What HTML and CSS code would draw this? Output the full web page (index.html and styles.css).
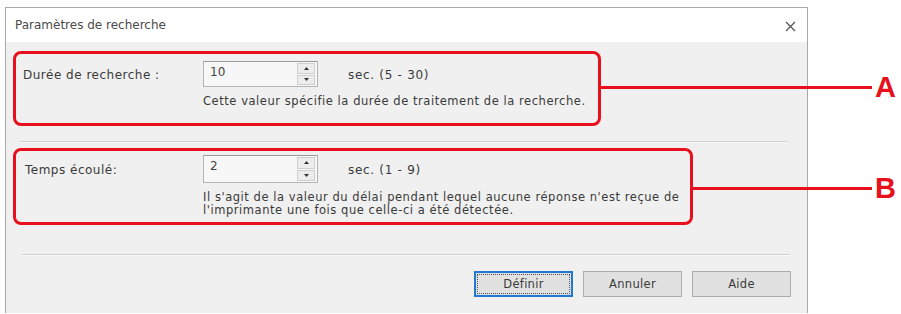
FILE: index.html
```html
<!DOCTYPE html>
<html lang="fr">
<head>
<meta charset="utf-8">
<title>Paramètres de recherche</title>
<link rel="stylesheet" href="styles.css">
</head>
<body>
<div class="dialog">
  <div class="titlebar">
    <span class="title">Paramètres de recherche</span>
    <span class="close" aria-label="Fermer">
      <svg width="11" height="11" viewBox="0 0 11 11"><path d="M1 1 L10 10 M10 1 L1 10" stroke="#555" stroke-width="1.3" fill="none"/></svg>
    </span>
  </div>
  <div class="body">
    <div class="group group-a">
      <div class="row">
        <span class="label">Durée de recherche :</span>
        <div class="spin">
          <span class="value">10</span>
          <div class="arrows">
            <span class="arrow"><svg width="5" height="3" viewBox="0 0 5 3"><path d="M0 3 L2.5 0 L5 3Z" fill="#333"/></svg></span>
            <span class="arrow"><svg width="5" height="3" viewBox="0 0 5 3"><path d="M0 0 L2.5 3 L5 0Z" fill="#333"/></svg></span>
          </div>
        </div>
        <span class="unit">sec. (5 - 30)</span>
      </div>
      <p class="desc desc-a">Cette valeur spécifie la durée de traitement de la recherche.</p>
      <div class="callout callout-a"><span class="leader"></span><span class="letter">A</span></div>
    </div>
    <div class="sep sep-top"></div>
    <div class="group group-b">
      <div class="row">
        <span class="label label-b">Temps écoulé:</span>
        <div class="spin">
          <span class="value">2</span>
          <div class="arrows">
            <span class="arrow"><svg width="5" height="3" viewBox="0 0 5 3"><path d="M0 3 L2.5 0 L5 3Z" fill="#333"/></svg></span>
            <span class="arrow"><svg width="5" height="3" viewBox="0 0 5 3"><path d="M0 0 L2.5 3 L5 0Z" fill="#333"/></svg></span>
          </div>
        </div>
        <span class="unit">sec. (1 - 9)</span>
      </div>
      <p class="desc desc-b">Il s'agit de la valeur du délai pendant lequel aucune réponse n'est reçue de<br>l'imprimante une fois que celle-ci a été détectée.</p>
      <div class="callout callout-b"><span class="leader"></span><span class="letter">B</span></div>
    </div>
    <div class="sep sep-bottom"></div>
    <div class="buttons">
      <button class="btn btn-default"><span class="focus">Définir</span></button>
      <button class="btn">Annuler</button>
      <button class="btn">Aide</button>
    </div>
  </div>
</div>
</body>
</html>
```

FILE: styles.css
```css
* { box-sizing: border-box; }
html, body { margin: 0; padding: 0; background: #ffffff; }
body {
  font-family: "DejaVu Sans", Verdana, sans-serif;
  font-size: 11px;
  color: #3a3a3a;
  width: 901px;
  height: 314px;
  overflow: hidden;
}
.dialog {
  margin: 7px 0 0 5px;
  width: 803px;
  height: 306px;
  border: 1px solid #a8a8a8;
  border-bottom: 0;
  background: #f0f0f0;
}
.titlebar {
  height: 34px;
  background: #ffffff;
  display: flex;
  align-items: center;
  justify-content: space-between;
  padding: 0 11px 0 9px;
}
.title { font-size: 12px; color: #4a4a4a; }
.close { display: flex; align-items: center; padding-top: 2px; }
.body { padding: 9px 16px 0 7px; }
.group {
  position: relative;
  border: 3px solid #e8101c;
  border-radius: 8px;
}
.group-a { width: 588px; height: 75px; padding: 7px 0 0 7px; }
.group-b { width: 680px; height: 77px; padding: 4px 0 0 7px; margin-top: 5px; }
.row { display: flex; align-items: center; height: 26px; }
.group-b .row { height: 28px; }
.label { width: 180px; padding-top: 1px; font-size: 12px; letter-spacing: 0.5px; }
.label-b { margin-left: 2px; width: 178px; }
.spin {
  width: 115px;
  height: 100%;
  display: flex;
  background: #f7f7f7;
  border: 1px solid #b4b4b4;
  border-top-color: #9a9a9a;
}
.value { flex: 1; padding: 3px 0 0 6px; color: #444; font-size: 12px; }
.arrows { width: 20px; display: flex; flex-direction: column; padding: 1px 2px 1px 0; gap: 1px; }
.arrow {
  flex: 1;
  display: flex;
  align-items: center;
  justify-content: center;
  background: #ececec;
  border: 1px solid #cfcfcf;
}
.unit { margin-left: 30px; padding-top: 1px; font-size: 12px; letter-spacing: 0.7px; }
.desc { margin: 0 0 0 180px; line-height: 13px; font-size: 11.5px; letter-spacing: 0.55px; white-space: nowrap; }
.desc-a { margin-top: 8px; }
.desc-b { margin-top: 8px; }
.callout {
  position: absolute;
  display: flex;
  align-items: center;
  height: 30px;
}
.callout-a { left: 100%; top: 18px; }
.callout-b { left: 100%; top: 22px; }
.leader { display: block; height: 3px; background: #e8101c; }
.callout-a .leader { width: 274px; }
.callout-b .leader { width: 182px; }
.letter {
  font-family: "Liberation Sans", Arial, sans-serif;
  font-weight: bold;
  font-size: 29px;
  color: #e8101c;
  margin-left: 3px;
  line-height: 30px;
}
.sep { height: 2px; border-top: 1px solid #cfcfcf; border-bottom: 1px solid #fafafa; }
.sep-top { margin: 15px 0 0 7px; width: 767px; }
.sep-bottom { margin: 29px 0 0 9px; width: 768px; }
.buttons {
  display: flex;
  justify-content: flex-end;
  gap: 10px;
  margin-top: 15px;
}
.btn {
  width: 99px;
  height: 26px;
  font-family: "DejaVu Sans", Verdana, sans-serif;
  font-size: 11.5px;
  letter-spacing: 0.3px;
  color: #3a3a3a;
  background: #e1e1e1;
  border: 1px solid #adadad;
  padding: 0;
}
.btn-default { border: 2px solid #1e78d4; padding: 1px; }
.focus {
  display: flex;
  align-items: center;
  justify-content: center;
  height: 100%;
  border: 1px dotted #555;
}
```
